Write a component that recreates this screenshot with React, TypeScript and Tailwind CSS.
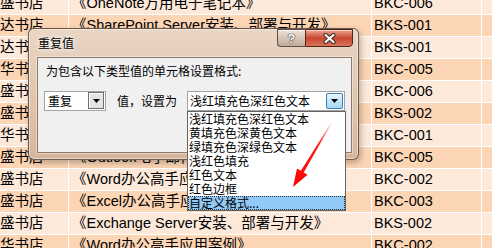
const rows: [string, string, string][] = [
  ["盛书店", "《OneNote万用电子笔记本》", "BKC-006"],
  ["达书店", "《SharePoint Server安装、部署与开发》", "BKS-001"],
  ["达书店", "《SharePoint Server安装、部署与开发》", "BKS-001"],
  ["华书店", "《Excel办公高手应用案例》", "BKC-005"],
  ["盛书店", "《OneNote万用电子笔记本》", "BKC-006"],
  ["盛书店", "《Exchange Server安装、部署与开发》", "BKS-002"],
  ["华书店", "《Word办公高手应用案例》", "BKC-001"],
  ["盛书店", "《Outlook电子邮件管理》", "BKC-005"],
  ["盛书店", "《Word办公高手应用案例》", "BKC-002"],
  ["盛书店", "《Excel办公高手应用案例》", "BKC-003"],
  ["盛书店", "《Exchange Server安装、部署与开发》", "BKS-002"],
  ["华书店", "《Word办公高手应用案例》", "BKC-002"],
];

const options = [
  "浅红填充色深红色文本",
  "黄填充色深黄色文本",
  "绿填充色深绿色文本",
  "浅红色填充",
  "红色文本",
  "红色边框",
  "自定义格式...",
];

function DownArrow() {
  return (
    <svg width="7" height="4" viewBox="0 0 7 4">
      <path d="M0 0h7L3.5 4z" fill="#000" />
    </svg>
  );
}

function Sheet() {
  return (
    <div className="-mt-[7px] flex flex-col gap-px bg-white">
      {rows.map((r, i) => (
        <div
          key={i}
          className="grid h-[21px] grid-cols-[68px_302px_109px_1fr] gap-px text-[14.5px] leading-[21px] text-black whitespace-nowrap"
        >
          <div className={`overflow-hidden ${i % 2 ? "bg-[#fcd5b4]" : "bg-[#fde9d9]"}`}>{r[0]}</div>
          <div className={`overflow-hidden pl-[3px] ${i % 2 ? "bg-[#fcd5b4]" : "bg-[#fde9d9]"}`}>{r[1]}</div>
          <div className={`overflow-hidden pl-[2px] ${i % 2 ? "bg-[#fcd5b4]" : "bg-[#fde9d9]"}`}>{r[2]}</div>
          <div className={i % 2 ? "bg-[#fcd5b4]" : "bg-[#fde9d9]"} />
        </div>
      ))}
    </div>
  );
}

function Dialog() {
  return (
    <div className="absolute left-[28px] top-[28px] flex h-[132px] w-[331px] flex-col rounded-[6px] border border-[#4e3f35]/80 bg-linear-to-b from-[#ead6c5] via-[#e1c6ae] to-[#d6b69b] pl-[8px] pr-[6px] pb-[6px] shadow-[inset_0_0_0_1px_rgba(255,255,255,0.45),2px_3px_6px_rgba(0,0,0,0.25)]">
      <div className="flex h-[28px] items-start">
        <span className="pl-[1px] pt-[6px] text-[12px] leading-[16px] text-black [text-shadow:0_0_6px_#fff,0_0_3px_#fff]">
          重复值
        </span>
        <div className="-mr-[1px] ml-auto flex h-[18px]">
          <div className="flex w-[28px] items-center justify-center rounded-bl-[4px] border border-r-0 border-[#5e4e45] bg-linear-to-b from-[#eee3da] via-[#d5c4b7] to-[#c0ab9c] shadow-[inset_0_1px_0_rgba(255,255,255,0.6)]">
            <span className="font-['Liberation_Sans'] text-[13px] leading-none font-bold text-white [text-shadow:0_0_1px_#333,0_0_1px_#333,0_0_1px_#333]">
              ?
            </span>
          </div>
          <div className="flex w-[48px] items-center justify-center rounded-br-[4px] border border-[#54231a] bg-linear-to-b from-[#eba594] via-[#c8472e] to-[#d9735b] shadow-[inset_0_1px_0_rgba(255,255,255,0.5)]">
            <svg width="13" height="11" viewBox="0 0 13 11">
              <path d="M2.5 2l8 7M10.5 2l-8 7" stroke="#3a2a25" strokeWidth="4.2" strokeLinecap="round" />
              <path d="M2.5 2l8 7M10.5 2l-8 7" stroke="#fff" strokeWidth="2.2" strokeLinecap="round" />
            </svg>
          </div>
        </div>
      </div>
      <div className="flex-1 border border-[#8f7866] bg-[#f0f0f0] px-[6px] pt-[6px] shadow-[0_0_0_1px_rgba(255,255,255,0.4)]">
        <p className="ml-[2px] text-[12px] leading-[14px] text-black">为包含以下类型值的单元格设置格式:</p>
        <div className="mt-[13px] flex h-[20px] items-center text-[12px] text-black">
          <div className="flex h-[20px] w-[62px] border border-[#a3a3a3] bg-white">
            <span className="pl-[3px] leading-[18px]">重复</span>
            <div className="ml-auto mr-[1px] flex h-[17px] w-[16px] items-center justify-center border border-[#6e6e6e] bg-[#e4e4e4] shadow-[inset_1px_1px_0_#fff]">
              <DownArrow />
            </div>
          </div>
          <span className="ml-[11px] leading-[18px]">值，设置为</span>
          <div className="ml-[10px] flex h-[20px] w-[158px] items-center border border-[#a3a3a3] bg-white">
            <span className="pl-[2px] leading-[18px]">浅红填充色深红色文本</span>
            <div className="ml-auto mr-[1px] flex h-[16px] w-[17px] items-center justify-center rounded-[2px] border border-[#3c7fb1] bg-linear-to-b from-[#eaf6fd] via-[#c4e5f8] to-[#a7d9f5]">
              <DownArrow />
            </div>
          </div>
        </div>
      </div>
    </div>
  );
}

function OptionList() {
  return (
    <div className="absolute left-[187px] top-[111px] w-[159px] border border-[#646464] bg-white text-[12px] text-black">
      {options.map((o, i) =>
        i === options.length - 1 ? (
          <div key={o} className="h-[14px] border border-dotted border-[#333] bg-[#91c9f7] pl-0 leading-[12px]">
            {o}
          </div>
        ) : (
          <div key={o} className="h-[14px] pl-[1px] leading-[14px]">
            {o}
          </div>
        )
      )}
    </div>
  );
}

function RedArrow() {
  return (
    <svg className="absolute left-[285px] top-[118px]" width="55" height="75" viewBox="0 0 55 75">
      <defs>
        <linearGradient id="ar" x1="47" y1="4" x2="8" y2="69" gradientUnits="userSpaceOnUse">
          <stop offset="0" stopColor="#ff0000" stopOpacity="0.1" />
          <stop offset="0.35" stopColor="#ff0000" stopOpacity="0.9" />
          <stop offset="1" stopColor="#ff0000" />
        </linearGradient>
      </defs>
      <polygon
        points="47.3,4.2 18.7,54.4 22.6,56.8 8,69 12,50.4 15.9,52.8 46.7,3.8"
        fill="url(#ar)"
      />
    </svg>
  );
}

export default function App() {
  return (
    <div className="relative h-[248px] w-[492px] overflow-hidden bg-white font-['Liberation_Sans','Noto_Sans_CJK_SC',sans-serif]">
      <Sheet />
      <div className="font-['Noto_Sans_CJK_SC','Liberation_Sans',sans-serif]">
        <Dialog />
        <OptionList />
      </div>
      <RedArrow />
    </div>
  );
}
